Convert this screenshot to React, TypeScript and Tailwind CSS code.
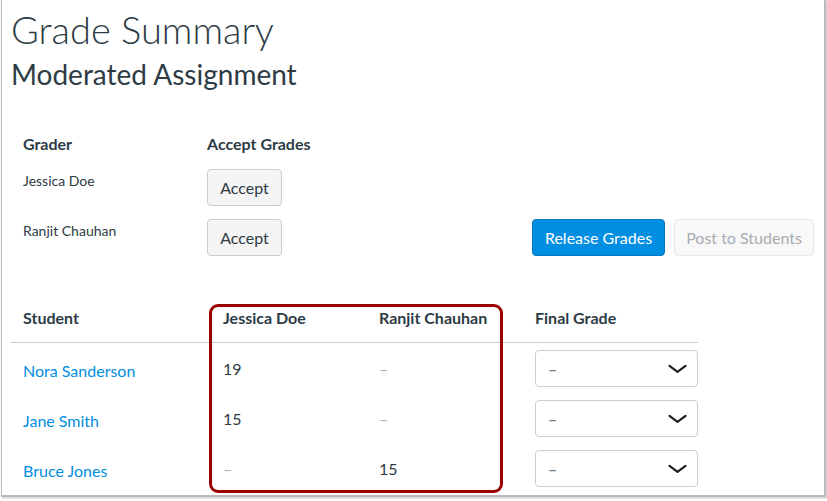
import React from "react";

const students = [
  { name: "Nora Sanderson", jessica: "19", ranjit: null },
  { name: "Jane Smith", jessica: "15", ranjit: null },
  { name: "Bruce Jones", jessica: null, ranjit: "15" },
];

const graders = ["Jessica Doe", "Ranjit Chauhan"];

const Chevron = () => (
  <svg width="19" height="10" viewBox="0 0 19 10" fill="none">
    <path d="M1.5 1.8 L9.5 7.8 L17.5 1.8" stroke="#1f1f1f" strokeWidth="2.2" strokeLinecap="round" strokeLinejoin="round" />
  </svg>
);

const Dash = () => <span className="text-[#a9b2b8]">–</span>;

export default function App() {
  return (
    <div className="min-h-screen bg-white font-['Lato','Open_Sans',sans-serif] text-[#2d3b45]">
      <div className="ml-[1px] w-[825px] h-[497px] border-l border-r-2 border-b-2 border-[#b9b9b9] shadow-[1px_1px_2px_rgba(0,0,0,0.25)] overflow-hidden pl-[9px] pr-[10px]">
        <h1 className="pt-[6px] text-[38px] leading-[46px] font-light">Grade Summary</h1>
        <h2 className="mt-[5px] text-[28px] leading-[34px]">Moderated Assignment</h2>

        {/* graders */}
        <div className="mt-[44px] pl-[12px]">
          <div className="flex text-[16px] leading-[18px] font-bold">
            <div className="w-[184px]">Grader</div>
            <div>Accept Grades</div>
          </div>
          <div className="mt-[16px] flex flex-col gap-[13px]">
            {graders.map((g, i) => (
              <div key={g} className="flex items-start">
                <div className="w-[184px] pt-[3px] text-[14px] leading-[17px]">{g}</div>
                <button className="h-[37px] w-[75px] rounded-[4px] border border-[#c7cdd1] bg-[#f5f5f5] text-[16px] text-[#2d3b45]">
                  Accept
                </button>
                {i === 1 && (
                  <div className="ml-auto flex gap-[9px]">
                    <button className="h-[37px] w-[133px] rounded-[4px] border border-[#0079c2] bg-[#008ee2] text-[16px] text-white">
                      Release Grades
                    </button>
                    <button className="h-[37px] w-[140px] rounded-[4px] border border-[#e6e8ea] bg-[#f8f8f8] text-[16px] text-[#a7adb2]">
                      Post to Students
                    </button>
                  </div>
                )}
              </div>
            ))}
          </div>
        </div>

        {/* table */}
        <div className="relative mt-[37px] w-[687px]">
          <div className="grid grid-cols-[212px_156px_156px_163px] h-[50px] border-b border-[#c7cdd1] text-[16px] leading-[19px] font-bold">
            <div className="pl-[12px] pt-[15px]">Student</div>
            <div className="pt-[15px]">Jessica Doe</div>
            <div className="pt-[15px]">Ranjit Chauhan</div>
            <div className="pt-[15px]">Final Grade</div>
          </div>
          {students.map((s) => (
            <div key={s.name} className="grid grid-cols-[212px_156px_156px_163px] h-[50px] text-[16px] leading-[19px]">
              <div className="pl-[12px] pt-[18px] text-[#008ee2]">{s.name}</div>
              <div className="pt-[16px]">{s.jessica ?? <Dash />}</div>
              <div className="pt-[16px]">{s.ranjit ?? <Dash />}</div>
              <div className="pt-[7px]">
                <div className="flex h-[37px] items-center justify-between rounded-[4px] border border-[#c7cdd1] bg-white pl-[12px] pr-[10px]">
                  <span className="font-bold text-[#73818c]">–</span>
                  <Chevron />
                </div>
              </div>
            </div>
          ))}
          <div className="absolute left-[198px] top-[11px] h-[189px] w-[294px] rounded-[9px] border-[3.5px] border-[#9b0000]" />
        </div>
      </div>
    </div>
  );
}
